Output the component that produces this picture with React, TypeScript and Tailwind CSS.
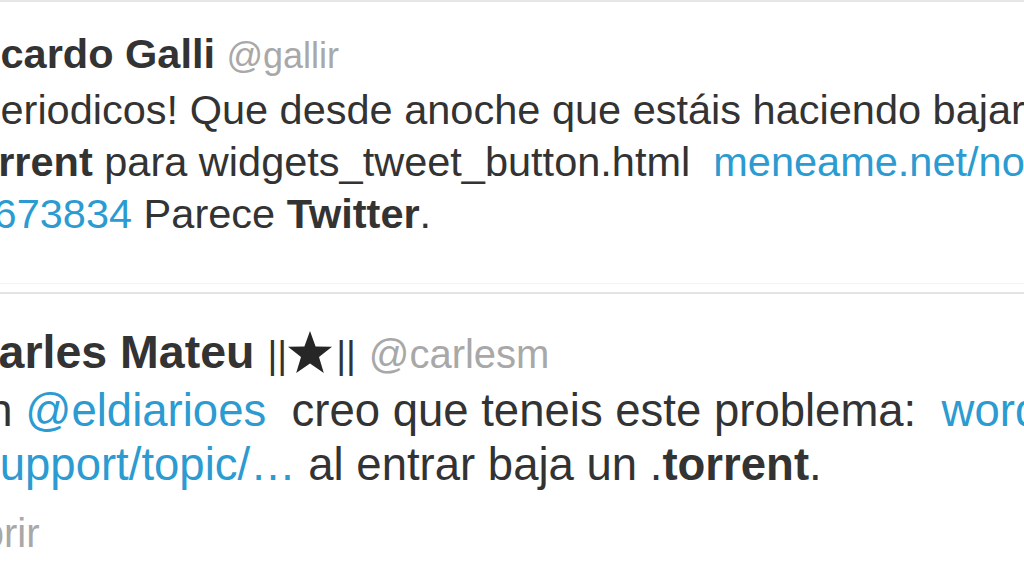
const Star = () => (
  <svg
    viewBox="0 0 46 44"
    className="inline-block h-[44px] w-[46px] align-[-6px]"
    aria-hidden="true"
  >
    <polygon
      points="23,1 28.6,16.6 45,16.8 32,27 36.8,43 23,33.4 9.2,43 14,27 1,16.8 17.4,16.6"
      fill="#262626"
    />
  </svg>
);

export default function App() {
  return (
    <div className="h-[576px] w-[1024px] overflow-hidden bg-white font-['Liberation_Sans',Arial,sans-serif] text-[#333333]">
      {/* First tweet */}
      <div className="border-t-2 border-b border-t-[#e6e6e6] border-b-[#f3f3f3] pt-[26px] pb-[43px]">
        <div className="ml-[-41px] whitespace-nowrap text-[41.5px] leading-[52px]">
          <span className="font-bold leading-none">Ricardo Galli</span>{" "}
          <span className="text-[36px] leading-none text-[#a8a8a8]">@gallir</span>
        </div>
        <div className="mt-[4px] text-[41.5px] leading-[52px]">
          <div className="ml-[-41px] whitespace-nowrap">
            ¡Periodicos! Que desde anoche que estáis haciendo bajar un .torrent a todo el mundo
          </div>
          <div className="ml-[-41px] whitespace-nowrap">
            <span className="font-bold">torrent</span> para widgets_tweet_button.html{"\u00a0 "}
            <span className="text-[#2b9bd1]">meneame.net/notame/…</span>
          </div>
          <div className="ml-[-41px] whitespace-nowrap">
            <span className="text-[#2b9bd1]">/1673834</span> Parece{" "}
            <span className="font-bold">Twitter</span>.
          </div>
        </div>
      </div>

      {/* Second tweet */}
      <div className="mt-[8px] border-t-2 border-[#e4e4e4] pt-[30px]">
        <div className="ml-[-35px] whitespace-nowrap text-[46.5px] leading-[56px]">
          <span className="font-bold leading-none">Carles Mateu</span>{" "}
          <span className="text-[38px] leading-none">||</span>
          <Star />
          <span className="ml-[3px] text-[38px] leading-none">||</span>{" "}
          <span className="text-[40px] leading-none text-[#a8a8a8]">@carlesm</span>
        </div>
        <div className="mt-[4px] text-[45.5px] leading-[54px]">
          <div className="ml-[-38px] whitespace-nowrap">
            en <span className="text-[#2b9bd1]">@eldiarioes</span>{"\u00a0 "}creo que teneis este problema:{"\u00a0 "}
            <span className="text-[#2b9bd1]">wordpress.org/support/topic/…</span>
          </div>
          <div className="ml-[-23px] whitespace-nowrap">
            <span className="text-[#2b9bd1]">support/topic/…</span> al entrar baja un .
            <span className="font-bold">torrent</span>.
          </div>
        </div>
        <div className="ml-[-45px] mt-[17px] whitespace-nowrap text-[40px] leading-[48px] text-[#a8a8a8]">
          Abrir
        </div>
      </div>
    </div>
  );
}
